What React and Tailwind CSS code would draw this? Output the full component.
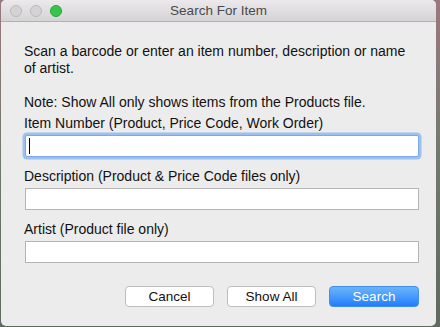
export default function App() {
  const font = { fontFamily: '"Liberation Sans", Arial, sans-serif' };

  return (
    <div
      className="w-[440px] h-[327px] bg-gradient-to-b from-[#9a7880] via-[#6f7a68] to-[#5d6a5e] overflow-hidden"
      style={font}
    >
      <div className="ml-px w-[435px] h-[326px] bg-[#ececec] rounded-[5px] overflow-hidden flex flex-col">
        {/* title bar */}
        <div className="relative h-[22px] shrink-0 bg-gradient-to-b from-[#ebe9eb] to-[#d5d3d5] border-b border-[#b1b1b1] flex items-center justify-center">
          <div className="absolute left-[9px] top-[5px] flex gap-[8px]">
            <span className="w-[12px] h-[12px] rounded-full bg-[#d3d3d3] border border-[#b9b9b9]" />
            <span className="w-[12px] h-[12px] rounded-full bg-[#d3d3d3] border border-[#b9b9b9]" />
            <span className="w-[12px] h-[12px] rounded-full bg-[#35c649] border border-[#2ba33b]" />
          </div>
          <span className="text-[13.5px] text-[#4a4a4a] leading-none">Search For Item</span>
        </div>

        {/* content */}
        <div className="flex flex-col pl-[23px] pr-[16px] pt-[21px] text-[14px] leading-[17px] text-[#111]">
          <p className="w-[385px]">Scan a barcode or enter an item number, description or name of artist.</p>
          <p className="mt-[17px]">Note: Show All only shows items from the Products file.</p>

          <label className="mt-[4px]">Item Number (Product, Price Code, Work Order)</label>
          <div className="mt-[3px] ml-[1px] w-[394px] h-[22px] bg-white border border-[#7fa9e4] shadow-[0_0_0_2.5px_#9cc0ef] rounded-[2px] flex items-center pl-[3px]">
            <span className="w-px h-[16px] bg-black" />
          </div>

          <label className="mt-[11px]">Description (Product &amp; Price Code files only)</label>
          <div className="mt-[3px] ml-[1px] w-[394px] h-[22px] bg-white border border-[#b5b5b5]" />

          <label className="mt-[11px]">Artist (Product file only)</label>
          <div className="mt-[3px] ml-[1px] w-[394px] h-[22px] bg-white border border-[#b5b5b5]" />

          <div className="mt-[23px] flex justify-end gap-[13px] pr-[1px] w-[396px]">
            <button className="w-[89px] h-[21px] bg-white border border-[#bdbdbd] rounded-[4px] text-[13.5px] text-[#111] leading-none">
              Cancel
            </button>
            <button className="w-[89px] h-[21px] bg-white border border-[#bdbdbd] rounded-[4px] text-[13.5px] text-[#111] leading-none">
              Show All
            </button>
            <button className="w-[90px] h-[21px] bg-gradient-to-b from-[#6bb4fb] to-[#1c7ffb] border border-[#3f8ef0] rounded-[4px] text-[13.5px] text-white leading-none">
              Search
            </button>
          </div>
        </div>
      </div>
    </div>
  );
}
